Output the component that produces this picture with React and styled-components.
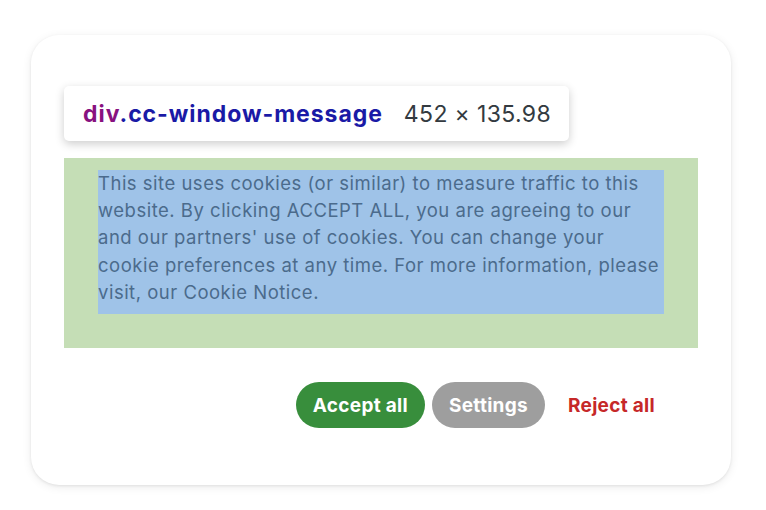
import React from 'react';
import styled, { createGlobalStyle } from 'styled-components';

const GlobalStyle = createGlobalStyle`
  html, body {
    margin: 0;
    padding: 0;
    background: #ffffff;
    font-family: Inter, "Noto Sans", sans-serif;
  }
`;

const Page = styled.div`
  width: 766px;
  height: 510px;
  padding: 35px 0 0 31px;
  box-sizing: border-box;
`;

const Card = styled.div`
  position: relative;
  width: 700px;
  height: 450px;
  box-sizing: border-box;
  padding: 123px 33px 0 33px;
  background: #fff;
  border-radius: 28px;
  box-shadow: 0 1px 3px rgba(0, 0, 0, 0.08), 0 2px 10px rgba(0, 0, 0, 0.08);
  display: flex;
  flex-direction: column;
`;

const PaddingBox = styled.div`
  background: #c5deb6;
  padding: 12px 34px 34px 34px;
`;

const Message = styled.div`
  background: #9fc3e8;
  color: #4b6b8c;
  font-size: 18.5px;
  letter-spacing: 0.5px;
  line-height: 27.2px;
  padding-bottom: 8px;
`;

const Tooltip = styled.div`
  position: absolute;
  left: 33px;
  top: 51px;
  height: 55px;
  padding: 0 18px 0 19px;
  display: flex;
  align-items: center;
  gap: 21px;
  background: #fff;
  border-radius: 5px;
  box-shadow: 0 3px 10px rgba(0, 0, 0, 0.2);
  white-space: nowrap;

  &::after {
    content: '';
    position: absolute;
    left: 24px;
    bottom: -10px;
    width: 20px;
    height: 20px;
    background: #fff;
    transform: rotate(45deg);
    box-shadow: 4px 4px 6px rgba(0, 0, 0, 0.08);
    z-index: -1;
  }
`;

const Selector = styled.span`
  font-size: 23px;
  font-weight: 700;
  color: #1a1aa6;
  letter-spacing: 0.95px;

  b {
    color: #881280;
    font-weight: 700;
  }
`;

const Size = styled.span`
  font-size: 23px;
  letter-spacing: 0.35px;
  color: #333a40;
`;

const Actions = styled.div`
  display: flex;
  justify-content: flex-end;
  align-items: center;
  gap: 7px;
  margin-top: 34px;
  padding-right: 43px;
`;

const Button = styled.button`
  height: 46px;
  border: none;
  border-radius: 23px;
  padding: ${p => (p.$link ? '0 0 0 16px' : '0 17px')};
  background: ${p => p.$bg || 'transparent'};
  color: ${p => p.$color || '#fff'};
  font-family: Inter, "Noto Sans", sans-serif;
  font-size: 19px;
  letter-spacing: 0.3px;
  font-weight: 700;
  cursor: pointer;
`;

export default function App() {
  return (
    <>
      <GlobalStyle />
      <Page>
        <Card>
          <Tooltip>
            <Selector><b>div</b>.cc-window-message</Selector>
            <Size>452 × 135.98</Size>
          </Tooltip>
          <PaddingBox>
            <Message>
              This site uses cookies (or similar) to measure traffic to this
              website. By clicking ACCEPT ALL, you are agreeing to our
              and our partners' use of cookies. You can change your
              cookie preferences at any time. For more information, please
              visit, our Cookie Notice.
            </Message>
          </PaddingBox>
          <Actions>
            <Button $bg="#388e3c">Accept all</Button>
            <Button $bg="#9e9e9e">Settings</Button>
            <Button $link $color="#c62828">Reject all</Button>
          </Actions>
        </Card>
      </Page>
    </>
  );
}
